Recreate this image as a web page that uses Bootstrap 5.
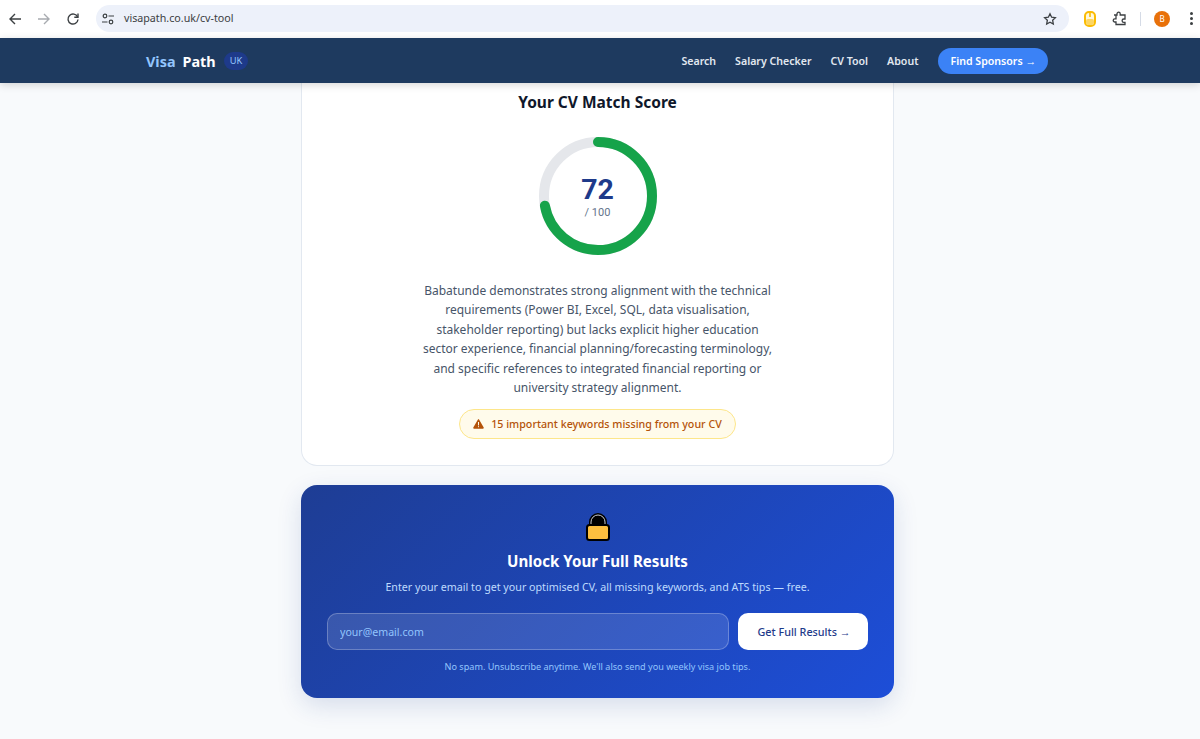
<!DOCTYPE html>
<html lang="en">
<head>
  <meta charset="UTF-8">
  <meta name="viewport" content="width=device-width, initial-scale=1.0">
  <title>Visa Path UK - CV Tool</title>
  <link rel="stylesheet" href="https://cdn.jsdelivr.net/npm/bootstrap@5.3.0/dist/css/bootstrap.min.css">
  <style>
    html, body { height: 100%; }
    body {
      background: #f8fafc;
      font-family: "Noto Sans", "Open Sans", sans-serif;
      overflow: hidden;
    }
    /* browser chrome */
    .chrome-bar { height: 38px; background: #fff; padding: 0 0 1px 1px; gap: 1px; }
    .chrome-btn { width: 28px; height: 28px; flex: none; }
    .url-pill {
      height: 27px; width: 973px; margin: 0 6px 0 8px; background: #edf1fa; border-radius: 14px;
      font-size: 10.7px; color: #3c4043; padding: 0 12px 0 5px; flex: none;
    }
    .url-icon { margin-right: 9px; }
    .chrome-divider { width: 1px; height: 14px; background: #d5dbe6; margin-left: 6px; flex: none; }
    .avatar-dot {
      width: 16px; height: 16px; border-radius: 50%; background: #e8710a; color: #fff;
      font-size: 8px; margin-left: 12px; flex: none;
    }
    .menu-dots { gap: 2px; margin-left: 6px; }
    .dot-v { width: 3px; height: 3px; border-radius: 50%; background: #3c4043; }
    /* site nav */
    .site-nav {
      height: 45px; background: #1e3a5f; padding: 0 152px 0 146px;
      box-shadow: 0 2px 8px rgba(0,0,0,.16); position: relative; z-index: 2;
    }
    .brand-row { padding-top: 2px; }
    .brand-visa { color: #93c5fd; font-weight: 700; font-size: 14.4px; }
    .brand-path { color: #fff; font-weight: 700; font-size: 14.4px; margin-left: 7px; }
    .brand-uk {
      background: #1e3a8a; color: #93c5fd; font-size: 9.3px; border-radius: 10px;
      padding: 3px 6px; margin-left: 8px; line-height: 12px;
    }
    .nav-links { gap: 19px; }
    .nav-links a { color: #e2e8f0; font-size: 10.6px; font-weight: 600; text-decoration: none; padding-top: 2px; }
    .nav-links a.find-btn {
      background: #3b82f6; color: #fff; border-radius: 13px; padding: 5px 12px; margin-left: 1px; line-height: 16px;
    }
    /* content */
    .page-wrap { padding-right: 5px; }
    .page-col { width: 593px; margin: 0 auto; }
    .score-box {
      background: #fff; border: 1px solid #e2e8f0; border-top: 0;
      border-radius: 0 0 16px 16px; height: 383px; padding-top: 9px;
    }
    .score-title { font-size: 15.5px; font-weight: 700; color: #0f172a; margin: 0; line-height: 21px; }
    .ring-wrap { width: 120px; height: 120px; margin-top: 23px; position: relative; }
    .ring-text { position: absolute; inset: 0; padding-top: 37px; font-family: Roboto, sans-serif; }
    .ring-num { font-size: 28.5px; font-weight: 700; color: #1e3a8a; line-height: 33px; }
    .ring-sub { font-size: 11px; color: #64748b; line-height: 13px; margin-top: 0; }
    .score-text { font-size: 12px; line-height: 19.4px; color: #475569; width: 354px; margin: 25px 0 0; }
    .warn-pill {
      background: #fffbeb; border: 1px solid #fde68a; border-radius: 15px; color: #b45309;
      font-size: 10.7px; font-weight: 500; height: 30px; padding: 0 13px; margin-top: 12px; gap: 7px;
    }
    .unlock-box {
      margin-top: 19px; height: 213px; border-radius: 16px; color: #fff; padding-top: 28px;
      background: linear-gradient(135deg, #1e3d94, #1d4ed8);
      box-shadow: 0 8px 24px rgba(30,58,138,.15);
    }
    .unlock-title { font-size: 15.1px; font-weight: 700; margin: 9px 0 0; line-height: 22px; }
    .unlock-sub { font-size: 10.7px; color: #bfdbfe; margin: 6px 0 0; line-height: 18px; }
    .unlock-row { gap: 9px; padding: 0 26px; margin-top: 17px; width: 100%; }
    .email-field, .email-field:focus {
      height: 37px; background: rgba(255,255,255,.12); border: 1px solid rgba(255,255,255,.25);
      border-radius: 10px; color: #fff; font-size: 10.6px; padding: 0 12px; box-shadow: none;
    }
    .email-field::placeholder { color: #93c5fd; opacity: 1; }
    .unlock-btn, .unlock-btn:hover {
      height: 37px; width: 130px; flex: none; background: #fff; color: #1e3a8a; border: 0;
      border-radius: 10px; font-size: 10.8px; font-weight: 500; padding: 2px 0 0 2px;
    }
    .unlock-note { font-size: 9.1px; color: #93c5fd; margin: 10px 0 0; line-height: 14px; }
  </style>
</head>
<body>
  <div class="chrome-bar d-flex align-items-center">
    <div class="chrome-btn d-flex align-items-center justify-content-center">
      <svg width="14" height="14" viewBox="0 0 14 14" fill="none" stroke="#3c4043" stroke-width="1.4"><path d="M13 7H2M7 2 2 7l5 5"/></svg>
    </div>
    <div class="chrome-btn d-flex align-items-center justify-content-center">
      <svg width="14" height="14" viewBox="0 0 14 14" fill="none" stroke="#a8abb0" stroke-width="1.4"><path d="M1 7h11M7 2l5 5-5 5"/></svg>
    </div>
    <div class="chrome-btn d-flex align-items-center justify-content-center">
      <svg width="14" height="14" viewBox="0 0 14 14" fill="none" stroke="#3c4043" stroke-width="1.4"><path d="M11.6 5A5 5 0 1 0 12 7.5"/><path d="M12 1.5V5.2H8.3" /></svg>
    </div>
    <div class="url-pill d-flex align-items-center">
      <svg class="url-icon" width="14" height="14" viewBox="0 0 14 14" fill="none" stroke="#3c4043" stroke-width="1.2"><circle cx="4" cy="4" r="1.8"/><path d="M7.5 4H13M1 10h5.5"/><circle cx="10" cy="10" r="1.8"/></svg>
      <span>visapath.co.uk/cv-tool</span>
      <svg class="ms-auto" width="14" height="14" viewBox="0 0 24 24" fill="none" stroke="#3c4043" stroke-width="2.2"><path d="m12 3 2.8 5.9 6.4.8-4.7 4.4 1.2 6.4-5.7-3.1-5.7 3.1 1.2-6.4-4.7-4.4 6.4-.8z"/></svg>
    </div>
    <div class="chrome-btn d-flex align-items-center justify-content-center">
      <svg width="12" height="16" viewBox="0 0 12 16"><rect x="1" y="1" width="10" height="14" rx="4" fill="#fff8dc" stroke="#fbbc04" stroke-width="2"/><rect x="2" y="8" width="8" height="6" rx="2" fill="#fdd663"/><rect x="5.2" y="2" width="1.6" height="4" fill="#fbbc04"/></svg>
    </div>
    <div class="chrome-btn d-flex align-items-center justify-content-center">
      <svg width="15" height="15" viewBox="0 0 15 15" fill="none" stroke="#3c4043" stroke-width="1.3"><path d="M2 4h3V2.8a1.6 1.6 0 0 1 3.2 0V4H13v4h-1.2a1.7 1.7 0 0 0 0 3.4H13V13.5H4V11H2.8a1.6 1.6 0 0 1 0-3.2H4V4z"/></svg>
    </div>
    <div class="chrome-divider"></div>
    <div class="avatar-dot d-flex align-items-center justify-content-center">B</div>
    <div class="chrome-btn menu-dots d-flex flex-column align-items-center justify-content-center">
      <span class="dot-v"></span><span class="dot-v"></span><span class="dot-v"></span>
    </div>
  </div>

  <nav class="site-nav d-flex align-items-center justify-content-between">
    <div class="brand-row d-flex align-items-center">
      <span class="brand-visa">Visa</span><span class="brand-path">Path</span><span class="brand-uk">UK</span>
    </div>
    <div class="nav-links d-flex align-items-center">
      <a href="#">Search</a>
      <a href="#">Salary Checker</a>
      <a href="#">CV Tool</a>
      <a href="#">About</a>
      <a href="#" class="find-btn">Find Sponsors →</a>
    </div>
  </nav>

  <div class="page-wrap">
  <main class="page-col">
    <section class="score-box d-flex flex-column align-items-center text-center">
      <h2 class="score-title">Your CV Match Score</h2>
      <div class="ring-wrap">
        <svg width="120" height="120" viewBox="0 0 120 120">
          <circle cx="60" cy="60" r="54" fill="none" stroke="#e5e7eb" stroke-width="10"/>
          <circle cx="60" cy="60" r="54" fill="none" stroke="#16a34a" stroke-width="10" stroke-linecap="round" stroke-dasharray="244.3 339.3" transform="rotate(-90 60 60)"/>
        </svg>
        <div class="ring-text">
          <div class="ring-num">72</div>
          <div class="ring-sub">/ 100</div>
        </div>
      </div>
      <p class="score-text">Babatunde demonstrates strong alignment with the technical requirements (Power BI, Excel, SQL, data visualisation, stakeholder reporting) but lacks explicit higher education sector experience, financial planning/forecasting terminology, and specific references to integrated financial reporting or university strategy alignment.</p>
      <div class="warn-pill d-inline-flex align-items-center">
        <svg width="11" height="10" viewBox="0 0 11 10"><path d="M5.5.3c.3 0 .5.1.7.4l4.5 7.8c.3.6-.1 1.2-.7 1.2H1c-.6 0-1-.6-.7-1.2L4.8.7c.2-.3.4-.4.7-.4z" fill="#b45309"/><rect x="5" y="3" width="1" height="3.4" fill="#fffbeb"/><rect x="5" y="7.2" width="1" height="1" fill="#fffbeb"/></svg>
        <span>15 important keywords missing from your CV</span>
      </div>
    </section>

    <section class="unlock-box d-flex flex-column align-items-center text-center">
      <svg width="24" height="28" viewBox="0 0 24 28">
        <path d="M4 13V9a8 8 0 0 1 16 0v4" fill="#000" stroke="#000" stroke-width="2"/>
        <path d="M5 12V9a7 7 0 0 1 14 0v3" fill="none" stroke="#c9ccd1" stroke-width="1"/>
        <rect x="1" y="12" width="22" height="15" rx="2.5" fill="#fdbf3f" stroke="#000" stroke-width="2"/>
      </svg>
      <h2 class="unlock-title">Unlock Your Full Results</h2>
      <p class="unlock-sub">Enter your email to get your optimised CV, all missing keywords, and ATS tips — free.</p>
      <form class="unlock-row d-flex" onsubmit="return false">
        <input class="form-control email-field" type="email" placeholder="your@email.com">
        <button class="btn unlock-btn" type="submit">Get Full Results →</button>
      </form>
      <p class="unlock-note">No spam. Unsubscribe anytime. We'll also send you weekly visa job tips.</p>
    </section>
  </main>
  </div>
  <script src="https://cdn.jsdelivr.net/npm/bootstrap@5.3.0/dist/js/bootstrap.bundle.min.js"></script>
</body>
</html>
